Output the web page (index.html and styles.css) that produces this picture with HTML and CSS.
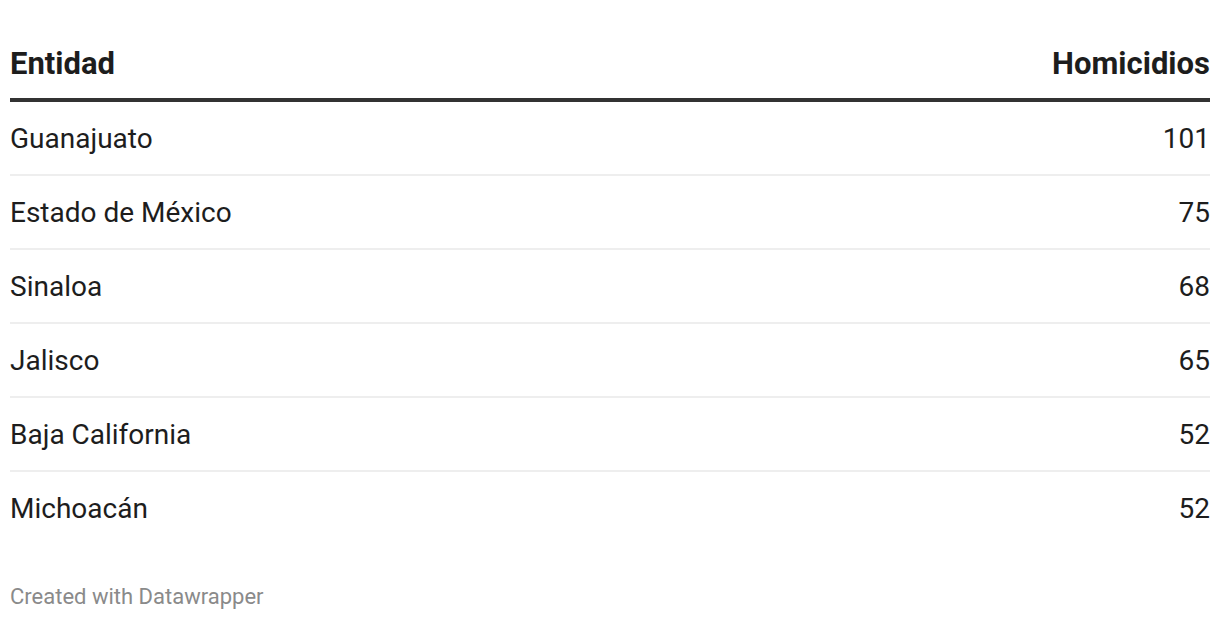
FILE: index.html
```html
<!DOCTYPE html>
<html lang="es">
<head>
<meta charset="utf-8">
<title>Homicidios por entidad</title>
<link rel="stylesheet" href="styles.css">
</head>
<body>
<div class="chart">
  <table class="dw-table">
    <thead>
      <tr>
        <th class="col-left">Entidad</th>
        <th class="col-right">Homicidios</th>
      </tr>
    </thead>
    <tbody>
      <tr><td class="col-left">Guanajuato</td><td class="col-right">101</td></tr>
      <tr><td class="col-left">Estado de México</td><td class="col-right">75</td></tr>
      <tr><td class="col-left">Sinaloa</td><td class="col-right">68</td></tr>
      <tr><td class="col-left">Jalisco</td><td class="col-right">65</td></tr>
      <tr><td class="col-left">Baja California</td><td class="col-right">52</td></tr>
      <tr><td class="col-left">Michoacán</td><td class="col-right">52</td></tr>
    </tbody>
  </table>
  <div class="footer">Created with Datawrapper</div>
</div>
</body>
</html>
```
FILE: styles.css
```css
html, body {
  margin: 0;
  padding: 0;
  background: #ffffff;
}
body {
  font-family: Roboto, "Liberation Sans", Arial, sans-serif;
  color: #1d1d1d;
}
.chart {
  padding: 48px 10px 0 10px;
}
.dw-table {
  width: 100%;
  border-collapse: collapse;
}
.dw-table th {
  font-size: 31px;
  font-weight: 700;
  line-height: 32px;
  padding: 0 0 18px 0;
  border-bottom: 4px solid #333333;
}
.dw-table td {
  font-size: 28px;
  font-weight: 400;
  line-height: 32px;
  padding: 21px 0 19px 0;
  vertical-align: middle;
  border-bottom: 2px solid #eeeeee;
}
.dw-table tbody tr:last-child td {
  border-bottom: none;
}
.col-left { text-align: left; }
.col-right { text-align: right; }
.footer {
  margin-top: 40px;
  font-size: 22px;
  line-height: 26px;
  color: #8a8a8a;
}
```
